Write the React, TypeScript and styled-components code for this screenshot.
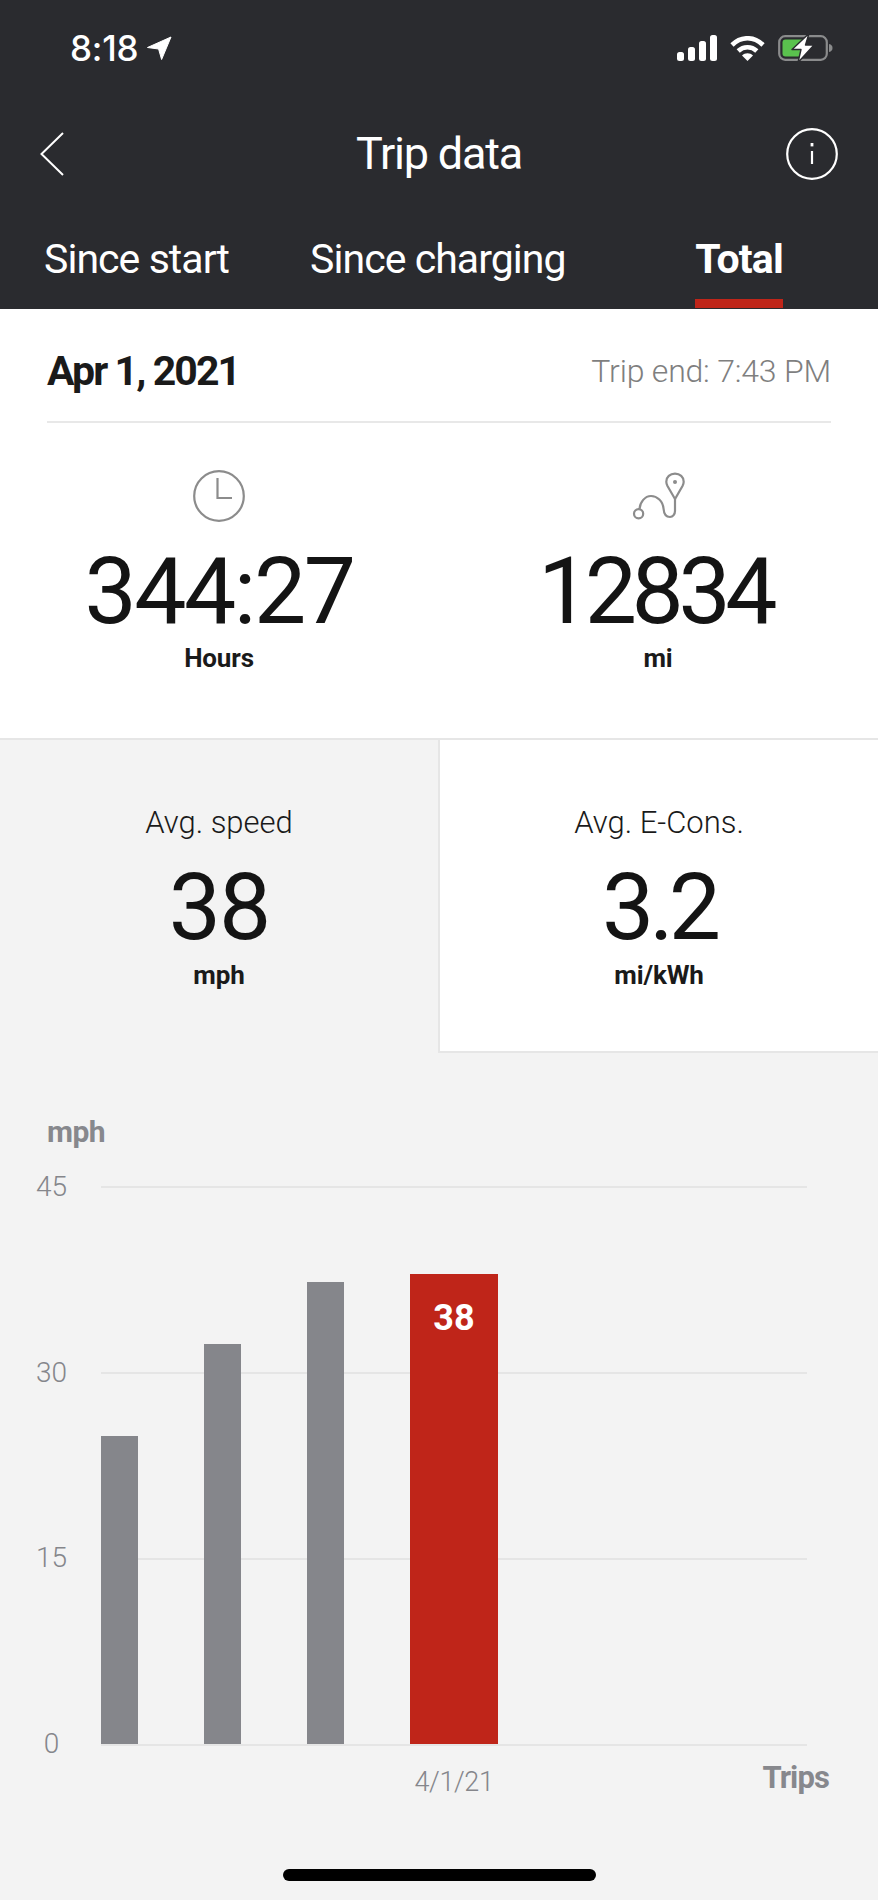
import React from "react";
import styled, { createGlobalStyle } from "styled-components";

const Global = createGlobalStyle`
  html, body { margin: 0; padding: 0; background: #f3f3f3; }
  * { box-sizing: border-box; }
  body { font-family: Roboto, "Liberation Sans", sans-serif; }
`;

const Page = styled.div`
  width: 878px;
  height: 1900px;
  display: flex;
  flex-direction: column;
  background: #f3f3f3;
  overflow: hidden;
`;

const Header = styled.header`
  height: 309px;
  flex: none;
  background: #2a2b2f;
  color: #fff;
  display: flex;
  flex-direction: column;
`;

const StatusBar = styled.div`
  height: 96px;
  padding: 0 45px 0 70px;
  display: flex;
  align-items: center;
  justify-content: space-between;
`;

const Clock = styled.div`
  display: flex;
  align-items: center;
  gap: 9px;
  font-family: Inter, sans-serif;
  font-weight: 500;
  font-size: 35px;
  letter-spacing: -0.2px;
`;

const StatusIcons = styled.div`
  display: flex;
  align-items: center;
  gap: 13px;
`;

const Nav = styled.div`
  height: 115px;
  padding: 0 40px;
  display: grid;
  grid-template-columns: 1fr auto 1fr;
  align-items: center;
  justify-items: start;
  & > :last-child { justify-self: end; }
`;

const Title = styled.h1`
  margin: 0;
  font-size: 45px;
  font-weight: 400;
  letter-spacing: -1.2px;
`;

const Tabs = styled.nav`
  height: 98px;
  padding: 0 95px 0 44px;
  display: flex;
  gap: 81px;
`;

const Tab = styled.div<{ $active?: boolean }>`
  height: 97px;
  font-size: 41px;
  line-height: 96px;
  font-weight: ${(p) => (p.$active ? 700 : 400)};
  letter-spacing: ${(p) => (p.$active ? "-0.8px" : "-0.95px")};
  border-bottom: 9px solid ${(p) => (p.$active ? "#bf2519" : "transparent")};
  margin-left: ${(p) => (p.$active ? "auto" : "0")};
`;

const Summary = styled.section`
  height: 431px;
  flex: none;
  background: #fff;
  border-bottom: 2px solid #e6e6e6;
  display: flex;
  flex-direction: column;
`;

const DateRow = styled.div`
  height: 114px;
  margin: 0 47px;
  padding-top: 11px;
  border-bottom: 2px solid #e8e8e8;
  display: flex;
  align-items: center;
  justify-content: space-between;
`;

const DateText = styled.div`
  font-size: 41px;
  font-weight: 700;
  color: #1a1a1a;
  letter-spacing: -1.9px;
`;

const TripEnd = styled.div`
  font-size: 32px;
  font-weight: 300;
  color: #7f7f7f;
  letter-spacing: -0.2px;
`;

const Metrics = styled.div`
  display: grid;
  grid-template-columns: 438px 440px;
  padding-top: 45px;
`;

const Metric = styled.div`
  display: flex;
  flex-direction: column;
  align-items: center;
`;

const IconSlot = styled.div`
  height: 56px;
  display: flex;
  align-items: center;
  justify-content: center;
`;

const BigValue = styled.div<{ $spacing: number; $nudge?: number }>`
  font-size: 93px;
  font-weight: 400;
  line-height: 110px;
  margin-top: 13px;
  margin-bottom: -4px;
  margin-right: ${(p) => p.$nudge ?? 0}px;
  letter-spacing: ${(p) => p.$spacing}px;
  color: #141414;
`;

const Unit = styled.div`
  font-size: 26px;
  font-weight: 700;
  line-height: 30px;
  letter-spacing: -0.15px;
  color: #1a1a1a;
`;

const Averages = styled.section`
  height: 313px;
  flex: none;
  display: grid;
  grid-template-columns: 438px 440px;
`;

const AverageCell = styled.div<{ $white?: boolean }>`
  padding-top: 63px;
  display: flex;
  flex-direction: column;
  align-items: center;
  background: ${(p) => (p.$white ? "#fff" : "transparent")};
  border-left: ${(p) => (p.$white ? "2px solid #e6e6e6" : "none")};
  border-bottom: ${(p) => (p.$white ? "2px solid #e6e6e6" : "none")};
`;

const AverageLabel = styled.div`
  font-size: 31px;
  font-weight: 300;
  line-height: 40px;
  color: #1a1a1a;
`;

const AverageValue = styled(BigValue)`
  line-height: 104px;
  margin-bottom: 0;
`;

const ChartSection = styled.section`
  flex: 1;
  padding: 61px 49px 0 36px;
  display: flex;
  flex-direction: column;
  position: relative;
`;

const AxisTitle = styled.div`
  font-size: 30px;
  font-weight: 700;
  color: #87888d;
  line-height: 36px;
  margin-left: 11px;
  height: 72px;
  letter-spacing: -0.6px;
`;

const ChartBody = styled.div`
  display: flex;
  height: 560px;
`;

const YAxis = styled.div`
  width: 65px;
  flex: none;
  margin: -17px 0 -16px;
  display: flex;
  flex-direction: column;
  justify-content: space-between;
`;

const YTick = styled.div`
  width: 31px;
  height: 36px;
  line-height: 36px;
  text-align: center;
  font-size: 28px;
  font-weight: 300;
  color: #85868b;
`;

const Plot = styled.div`
  width: 706px;
  height: 560px;
  position: relative;
`;

const GridLines = styled.div`
  position: absolute;
  inset: 0;
  display: flex;
  flex-direction: column;
  justify-content: space-between;
`;

const GridLine = styled.div`
  height: 2px;
  background: #e5e5e5;
`;

const Bars = styled.div`
  position: absolute;
  inset: 0 0 2px 0;
  display: flex;
  align-items: flex-end;
  gap: 66px;
`;

const Bar = styled.div<{ $active?: boolean }>`
  flex: none;
  width: ${(p) => (p.$active ? "88px" : "37px")};
  background: ${(p) => (p.$active ? "#bf2519" : "#85868b")};
  color: #fff;
  font-size: 36px;
  font-weight: 700;
  text-align: center;
  padding-top: 23px;
`;

const XAxis = styled.div`
  height: 60px;
  margin-left: 65px;
  display: flex;
`;

const XDate = styled.div`
  margin-left: 309px;
  width: 88px;
  margin-top: 18px;
  line-height: 36px;
  text-align: center;
  font-size: 27px;
  font-weight: 300;
  color: #85868b;
  letter-spacing: -0.4px;
  white-space: nowrap;
`;

const XTitle = styled.div`
  margin-left: auto;
  margin-top: 14px;
  line-height: 36px;
  font-size: 31px;
  font-weight: 700;
  color: #87888d;
  letter-spacing: -0.9px;
`;

const HomeBar = styled.div`
  width: 313px;
  height: 12px;
  border-radius: 6px;
  background: #000;
  position: absolute;
  left: 283px;
  bottom: 19px;
`;

const LocationArrow = () => (
  <svg width="25" height="24" viewBox="0 0 25 24">
    <path d="M24 1 L0.5 11.5 L11.6 13 L14.6 23.5 Z" fill="#fff" stroke="#fff" strokeLinejoin="round" />
  </svg>
);

const SignalIcon = () => (
  <svg width="40" height="26" viewBox="0 0 40 26" fill="#fff">
    <rect x="0" y="17" width="7" height="9" rx="2.5" />
    <rect x="11" y="12" width="7" height="14" rx="2.5" />
    <rect x="22" y="6" width="7" height="20" rx="2.5" />
    <rect x="33" y="0" width="7" height="26" rx="2.5" />
  </svg>
);

const WifiIcon = () => (
  <svg width="35" height="25" viewBox="0 0 35 25" fill="none" stroke="#fff" strokeWidth="4.6">
    <path d="M2 9 C 11 0, 24 0, 33 9" />
    <path d="M8.2 15 C 13.5 10, 21.5 10, 26.8 15" />
    <path d="M17.5 25 L12 19.5 C 15 16.5, 20 16.5, 23 19.5 Z" fill="#fff" stroke="none" />
  </svg>
);

const BatteryIcon = () => (
  <svg width="55" height="30" viewBox="0 -2 55 30">
    <rect x="1.2" y="1.2" width="47.6" height="23.6" rx="6" fill="none" stroke="#8a8b8c" strokeWidth="2.2" />
    <rect x="4.5" y="4.5" width="22" height="17" rx="3" fill="#5ac24e" />
    <path d="M51 9 C 53.5 9.5, 54.5 11, 54.5 13 C 54.5 15, 53.5 16.5, 51 17 Z" fill="#8a8b8c" />
    <path d="M31 -1.5 L14 14.5 L23 14.5 L20 27.5 L36 10 L27.5 10 Z" fill="#fff" stroke="#2a2b2f" strokeWidth="1.4" strokeLinejoin="round" />
  </svg>
);

const BackIcon = () => (
  <svg width="24" height="44" viewBox="0 0 24 44" fill="none" stroke="#fff" strokeWidth="2">
    <path d="M23 1 L1.5 22 L23 43" />
  </svg>
);

const InfoIcon = () => (
  <svg width="52" height="52" viewBox="0 0 52 52" fill="none" stroke="#fff" strokeWidth="2.2">
    <circle cx="26" cy="26" r="24.8" />
    <path d="M26 23 V36" />
    <path d="M26 15 V18.4" strokeWidth="2.8" />
  </svg>
);

const ClockIcon = () => (
  <svg width="52" height="52" viewBox="0 0 52 52" fill="none" stroke="#8c8c8c" strokeWidth="2.2">
    <circle cx="26" cy="26" r="24.8" />
    <path d="M24.5 8 V28 H39" />
  </svg>
);

const RouteIcon = () => (
  <svg width="56" height="50" viewBox="0 0 56 50" fill="none" stroke="#8c8c8c" strokeWidth="2.2">
    <circle cx="8.6" cy="42.7" r="4.6" />
    <path d="M9.5 38 C 10 31, 15 25, 21 25 C 27 25, 33 30, 33.6 38 C 34 44, 37 46, 40 46 C 43 46, 45 43, 45 40 V28" />
    <path d="M45 28 L37.5 15 C 36.5 13, 36.3 12, 36.3 10.7 C 36.3 6, 40 2.7, 45 2.7 C 50 2.7, 53.7 6, 53.7 10.7 C 53.7 12, 53.5 13, 52.5 15 Z" />
    <circle cx="45" cy="11" r="2" fill="#8c8c8c" stroke="none" />
  </svg>
);

const bars = [308, 400, 462];

export default function App() {
  return (
    <Page>
      <Global />
      <Header>
        <StatusBar>
          <Clock>
            8:18
            <LocationArrow />
          </Clock>
          <StatusIcons>
            <SignalIcon />
            <WifiIcon />
            <BatteryIcon />
          </StatusIcons>
        </StatusBar>
        <Nav>
          <BackIcon />
          <Title>Trip data</Title>
          <InfoIcon />
        </Nav>
        <Tabs>
          <Tab>Since start</Tab>
          <Tab>Since charging</Tab>
          <Tab $active>Total</Tab>
        </Tabs>
      </Header>
      <Summary>
        <DateRow>
          <DateText>Apr 1, 2021</DateText>
          <TripEnd>Trip end: 7:43 PM</TripEnd>
        </DateRow>
        <Metrics>
          <Metric>
            <IconSlot><ClockIcon /></IconSlot>
            <BigValue $spacing={-2.5}>344:27</BigValue>
            <Unit>Hours</Unit>
          </Metric>
          <Metric>
            <IconSlot><RouteIcon /></IconSlot>
            <BigValue $spacing={-5.5} $nudge={6}>12834</BigValue>
            <Unit>mi</Unit>
          </Metric>
        </Metrics>
      </Summary>
      <Averages>
        <AverageCell>
          <AverageLabel>Avg. speed</AverageLabel>
          <AverageValue $spacing={-2}>38</AverageValue>
          <Unit>mph</Unit>
        </AverageCell>
        <AverageCell $white>
          <AverageLabel>Avg. E-Cons.</AverageLabel>
          <AverageValue $spacing={-5}>3.2</AverageValue>
          <Unit>mi/kWh</Unit>
        </AverageCell>
      </Averages>
      <ChartSection>
        <AxisTitle>mph</AxisTitle>
        <ChartBody>
          <YAxis>
            <YTick>45</YTick>
            <YTick>30</YTick>
            <YTick>15</YTick>
            <YTick>0</YTick>
          </YAxis>
          <Plot>
            <GridLines>
              <GridLine />
              <GridLine />
              <GridLine />
              <GridLine />
            </GridLines>
            <Bars>
              {bars.map((h) => (
                <Bar key={h} style={{ height: h }} />
              ))}
              <Bar $active style={{ height: 470 }}>38</Bar>
            </Bars>
          </Plot>
        </ChartBody>
        <XAxis>
          <XDate>4/1/21</XDate>
          <XTitle>Trips</XTitle>
        </XAxis>
        <HomeBar />
      </ChartSection>
    </Page>
  );
}
